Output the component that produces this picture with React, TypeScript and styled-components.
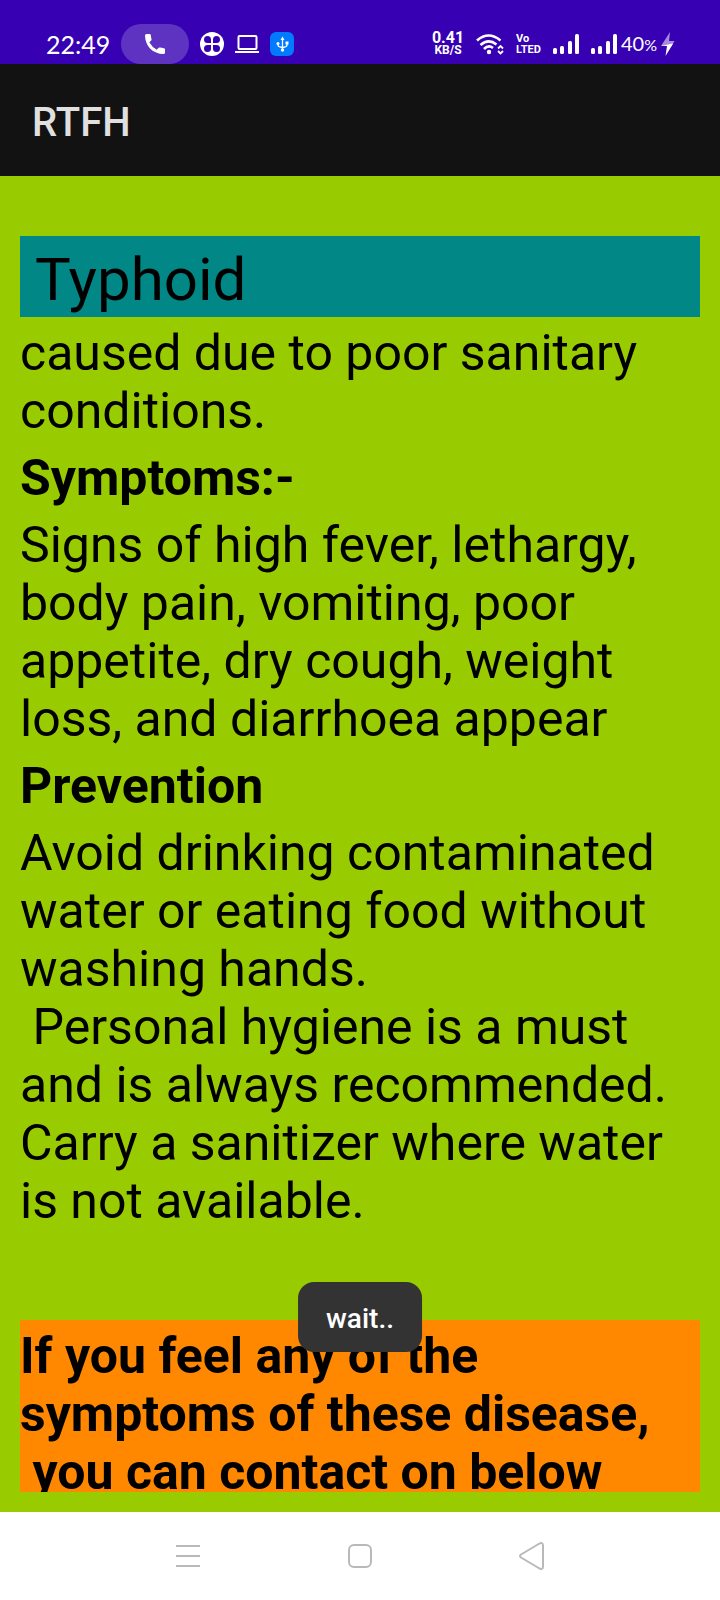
import React from "react";
import styled, { createGlobalStyle } from "styled-components";

const GlobalStyle = createGlobalStyle`
  *, *::before, *::after { box-sizing: border-box; }
  body { margin: 0; font-family: Roboto, sans-serif; }
`;

const Screen = styled.div`
  position: relative;
  display: flex;
  flex-direction: column;
  height: 100vh;
  background: #99cc00;
  color: #000000;
`;

const StatusBar = styled.div`
  display: flex;
  flex: none;
  align-items: center;
  justify-content: space-between;
  padding: 24px 45px 0 46px;
  background: #3700b3;
  color: #ffffff;
`;

const StatusGroup = styled.div<{ $gap: number }>`
  display: flex;
  align-items: center;
  gap: ${({ $gap }) => $gap}px;
`;

const Clock = styled.time`
  font: 400 25px/40px Lato, sans-serif;
`;

const CallPill = styled.span`
  display: flex;
  align-items: center;
  justify-content: center;
  width: 68px;
  height: 40px;
  border-radius: 20px;
  background: #5f33c2;
`;

const Stack = styled.span`
  display: flex;
  flex-direction: column;
  align-items: center;
`;

const Speed = styled.span`
  font: 700 16px/12px Roboto, sans-serif;
`;

const SpeedUnit = styled.span`
  font: 700 12px/12px Roboto, sans-serif;
`;

const Volte = styled.span`
  display: flex;
  flex-direction: column;
  font: 700 11px/11px Roboto, sans-serif;
`;

const Battery = styled.span`
  font: 400 20px/24px Lato, sans-serif;
`;

const Percent = styled.span`
  font-size: 16px;
`;

const AppBar = styled.header`
  display: flex;
  flex: none;
  align-items: center;
  height: 112px;
  padding: 6px 32px 0;
  background: #121212;
`;

const AppTitle = styled.h1`
  margin: 0;
  color: #e0e0e0;
  font-size: 40px;
  font-weight: 500;
  line-height: 48px;
`;

const Body = styled.main`
  display: flex;
  flex: 1;
  min-height: 0;
  padding: 60px 20px 20px;
`;

const ScrollArea = styled.div`
  flex: 1;
  overflow-y: auto;
  scrollbar-width: none;
`;

const DiseaseName = styled.h2`
  margin: 0;
  padding: 9px 0 2px;
  background: #018786;
  font-size: 60px;
  font-weight: 400;
  line-height: 70px;
  white-space: pre-wrap;
`;

const Paragraph = styled.p`
  margin: 0;
  padding: 7px 0 2px;
  font-size: 50px;
  line-height: 58px;
  white-space: pre-wrap;
`;

const SectionTitle = styled.h3`
  margin: 0;
  padding: 7px 0 2px;
  font-size: 50px;
  font-weight: 700;
  line-height: 58px;
`;

const Notice = styled(Paragraph)`
  margin-top: 88px;
  background: #ff8800;
  font-weight: 700;
`;

const Toast = styled.div`
  position: absolute;
  bottom: 248px;
  left: 50%;
  transform: translateX(-50%);
  padding: 21px 28px 17px;
  border-radius: 16px;
  background: #333333;
  color: #ffffff;
  font-size: 28px;
  font-weight: 500;
  line-height: 32px;
`;

const NavBar = styled.nav`
  display: flex;
  flex: none;
  align-items: center;
  justify-content: center;
  gap: 88px;
  height: 88px;
  background: #ffffff;
`;

const NavButton = styled.button`
  display: flex;
  align-items: center;
  justify-content: center;
  width: 84px;
  height: 64px;
  padding: 0;
  border: 0;
  background: transparent;
  color: #b9b9b9;
`;

const PhoneIcon = () => (
  <svg width="22" height="22" viewBox="0 0 22 22" fill="#fff">
    <path d="M1 2.500Q1 1 2.500 1H5.500Q6.700 1 6.800 2.200Q7 4.500 7.500 6Q7.700 7 7 7.700L5.300 9.200Q8 14 12.800 16.700L14.300 15Q15 14.300 16 14.600Q17.500 15 19.800 15.200Q21 15.300 21 16.500V19.500Q21 21 19.500 21C9 21 1 13 1 2.500Z" />
  </svg>
);

const CloverIcon = () => (
  <svg width="24" height="24" viewBox="0 0 24 24">
    <circle cx="12" cy="12" r="12" fill="#fff" />
    <g fill="#3700b3">
      <path d="M11 11H7.500A3.500 3.500 0 1 1 11 7.500Z" />
      <path d="M13 11V7.500A3.500 3.500 0 1 1 16.500 11Z" />
      <path d="M11 13V16.500A3.500 3.500 0 1 1 7.500 13Z" />
      <path d="M13 13H16.500A3.500 3.500 0 1 1 13 16.500Z" />
    </g>
  </svg>
);

const LaptopIcon = () => (
  <svg width="24" height="20" viewBox="0 0 24 20" fill="none" stroke="#fff" strokeWidth="2">
    <rect x="3.500" y="2" width="18" height="13" rx="1" />
    <path d="M0 18H24" />
  </svg>
);

const UsbIcon = () => (
  <svg width="24" height="24" viewBox="0 0 24 24" fill="none" stroke="#fff" strokeWidth="1.300">
    <rect width="24" height="24" rx="6" fill="#007aff" stroke="none" />
    <path d="M12.500 7V18M8 12V13Q8 15 12.500 15.500Q17 15 17 13V11" />
    <path d="M12.500 4.500L14.500 8H10.500Z" fill="#fff" stroke="none" />
    <circle cx="12.500" cy="18" r="1.700" fill="#fff" stroke="none" />
    <circle cx="8" cy="11.500" r="1.500" fill="#fff" stroke="none" />
    <rect x="15.500" y="9.500" width="3" height="3" fill="#fff" stroke="none" />
  </svg>
);

const WifiIcon = () => (
  <svg width="28" height="22" viewBox="0 0 28 22" fill="none" stroke="#fff" strokeWidth="2.600">
    <path d="M1 7.500Q12.500 -2.500 24.500 7.500" />
    <path d="M4.500 12Q12.500 5 20.500 11.500" />
    <path d="M8 16Q12.500 11.500 17 15" />
    <circle cx="13" cy="19" r="2.200" fill="#fff" stroke="none" />
    <path d="M22 15.500L24.500 13L27 15.500M22 18L24.500 20.500L27 18" strokeWidth="1.800" />
  </svg>
);

const SignalIcon = () => (
  <svg width="26" height="22" viewBox="0 0 26 22" fill="#fff">
    <rect x="0" y="15" width="4" height="6" rx="1.500" />
    <rect x="7" y="13" width="4" height="8" rx="1.500" />
    <rect x="15" y="8" width="4" height="13" rx="1.500" />
    <rect x="22" y="1" width="4" height="20" rx="1.500" />
  </svg>
);

const BoltIcon = () => (
  <svg width="14" height="24" viewBox="0 0 14 24">
    <path d="M9 0L0 14H10.700L13.500 9H8Z" fill="#a78ae0" />
    <path d="M0 14H6L4.500 24L10.700 14L12 11.500Z" fill="#fff" />
  </svg>
);

const MenuIcon = () => (
  <svg width="24" height="24" viewBox="0 0 24 24" stroke="currentColor" strokeWidth="2">
    <path d="M0 2H24M0 12H24M0 22H24" />
  </svg>
);

const HomeIcon = () => (
  <svg width="24" height="24" viewBox="0 0 24 24" fill="none" stroke="currentColor" strokeWidth="2">
    <rect x="1" y="1" width="22" height="22" rx="5" />
  </svg>
);

const BackIcon = () => (
  <svg width="26" height="28" viewBox="0 0 26 28" fill="none" stroke="currentColor" strokeWidth="2" strokeLinejoin="round">
    <path d="M2 12.500L20.500 1.500Q24 0 24 3.500V24.500Q24 28 20.500 26.500L2 15.500Q0 14 2 12.500Z" />
  </svg>
);

export default function App() {
  return (
    <Screen>
      <GlobalStyle />
      <StatusBar>
        <StatusGroup $gap={11}>
          <Clock>22:49</Clock>
          <CallPill>
            <PhoneIcon />
          </CallPill>
          <CloverIcon />
          <LaptopIcon />
          <UsbIcon />
        </StatusGroup>
        <StatusGroup $gap={4}>
          <StatusGroup $gap={12}>
            <Stack>
              <Speed>0.41</Speed>
              <SpeedUnit>KB/S</SpeedUnit>
            </Stack>
            <WifiIcon />
            <Volte>
              <span>Vo</span>
              <span>LTED</span>
            </Volte>
            <SignalIcon />
            <SignalIcon />
          </StatusGroup>
          <Battery>
            40<Percent>%</Percent>
          </Battery>
          <BoltIcon />
        </StatusGroup>
      </StatusBar>
      <AppBar>
        <AppTitle>RTFH</AppTitle>
      </AppBar>
      <Body>
        <ScrollArea>
          <DiseaseName>{" Typhoid"}</DiseaseName>
          <Paragraph>caused due to poor sanitary conditions.</Paragraph>
          <SectionTitle>Symptoms:-</SectionTitle>
          <Paragraph>
            Signs of high fever, lethargy, body pain, vomiting, poor appetite, dry cough, weight loss, and diarrhoea appear
          </Paragraph>
          <SectionTitle>Prevention</SectionTitle>
          <Paragraph>
            {"Avoid drinking contaminated water or eating food without washing hands.\n Personal hygiene is a must and is always recommended. Carry a sanitizer where water is not available."}
          </Paragraph>
          <Notice>{"If you feel any of the symptoms of these disease,\n you can contact on below"}</Notice>
        </ScrollArea>
      </Body>
      <Toast role="status">wait..</Toast>
      <NavBar aria-label="System navigation">
        <NavButton aria-label="Recent apps">
          <MenuIcon />
        </NavButton>
        <NavButton aria-label="Home">
          <HomeIcon />
        </NavButton>
        <NavButton aria-label="Back">
          <BackIcon />
        </NavButton>
      </NavBar>
    </Screen>
  );
}
